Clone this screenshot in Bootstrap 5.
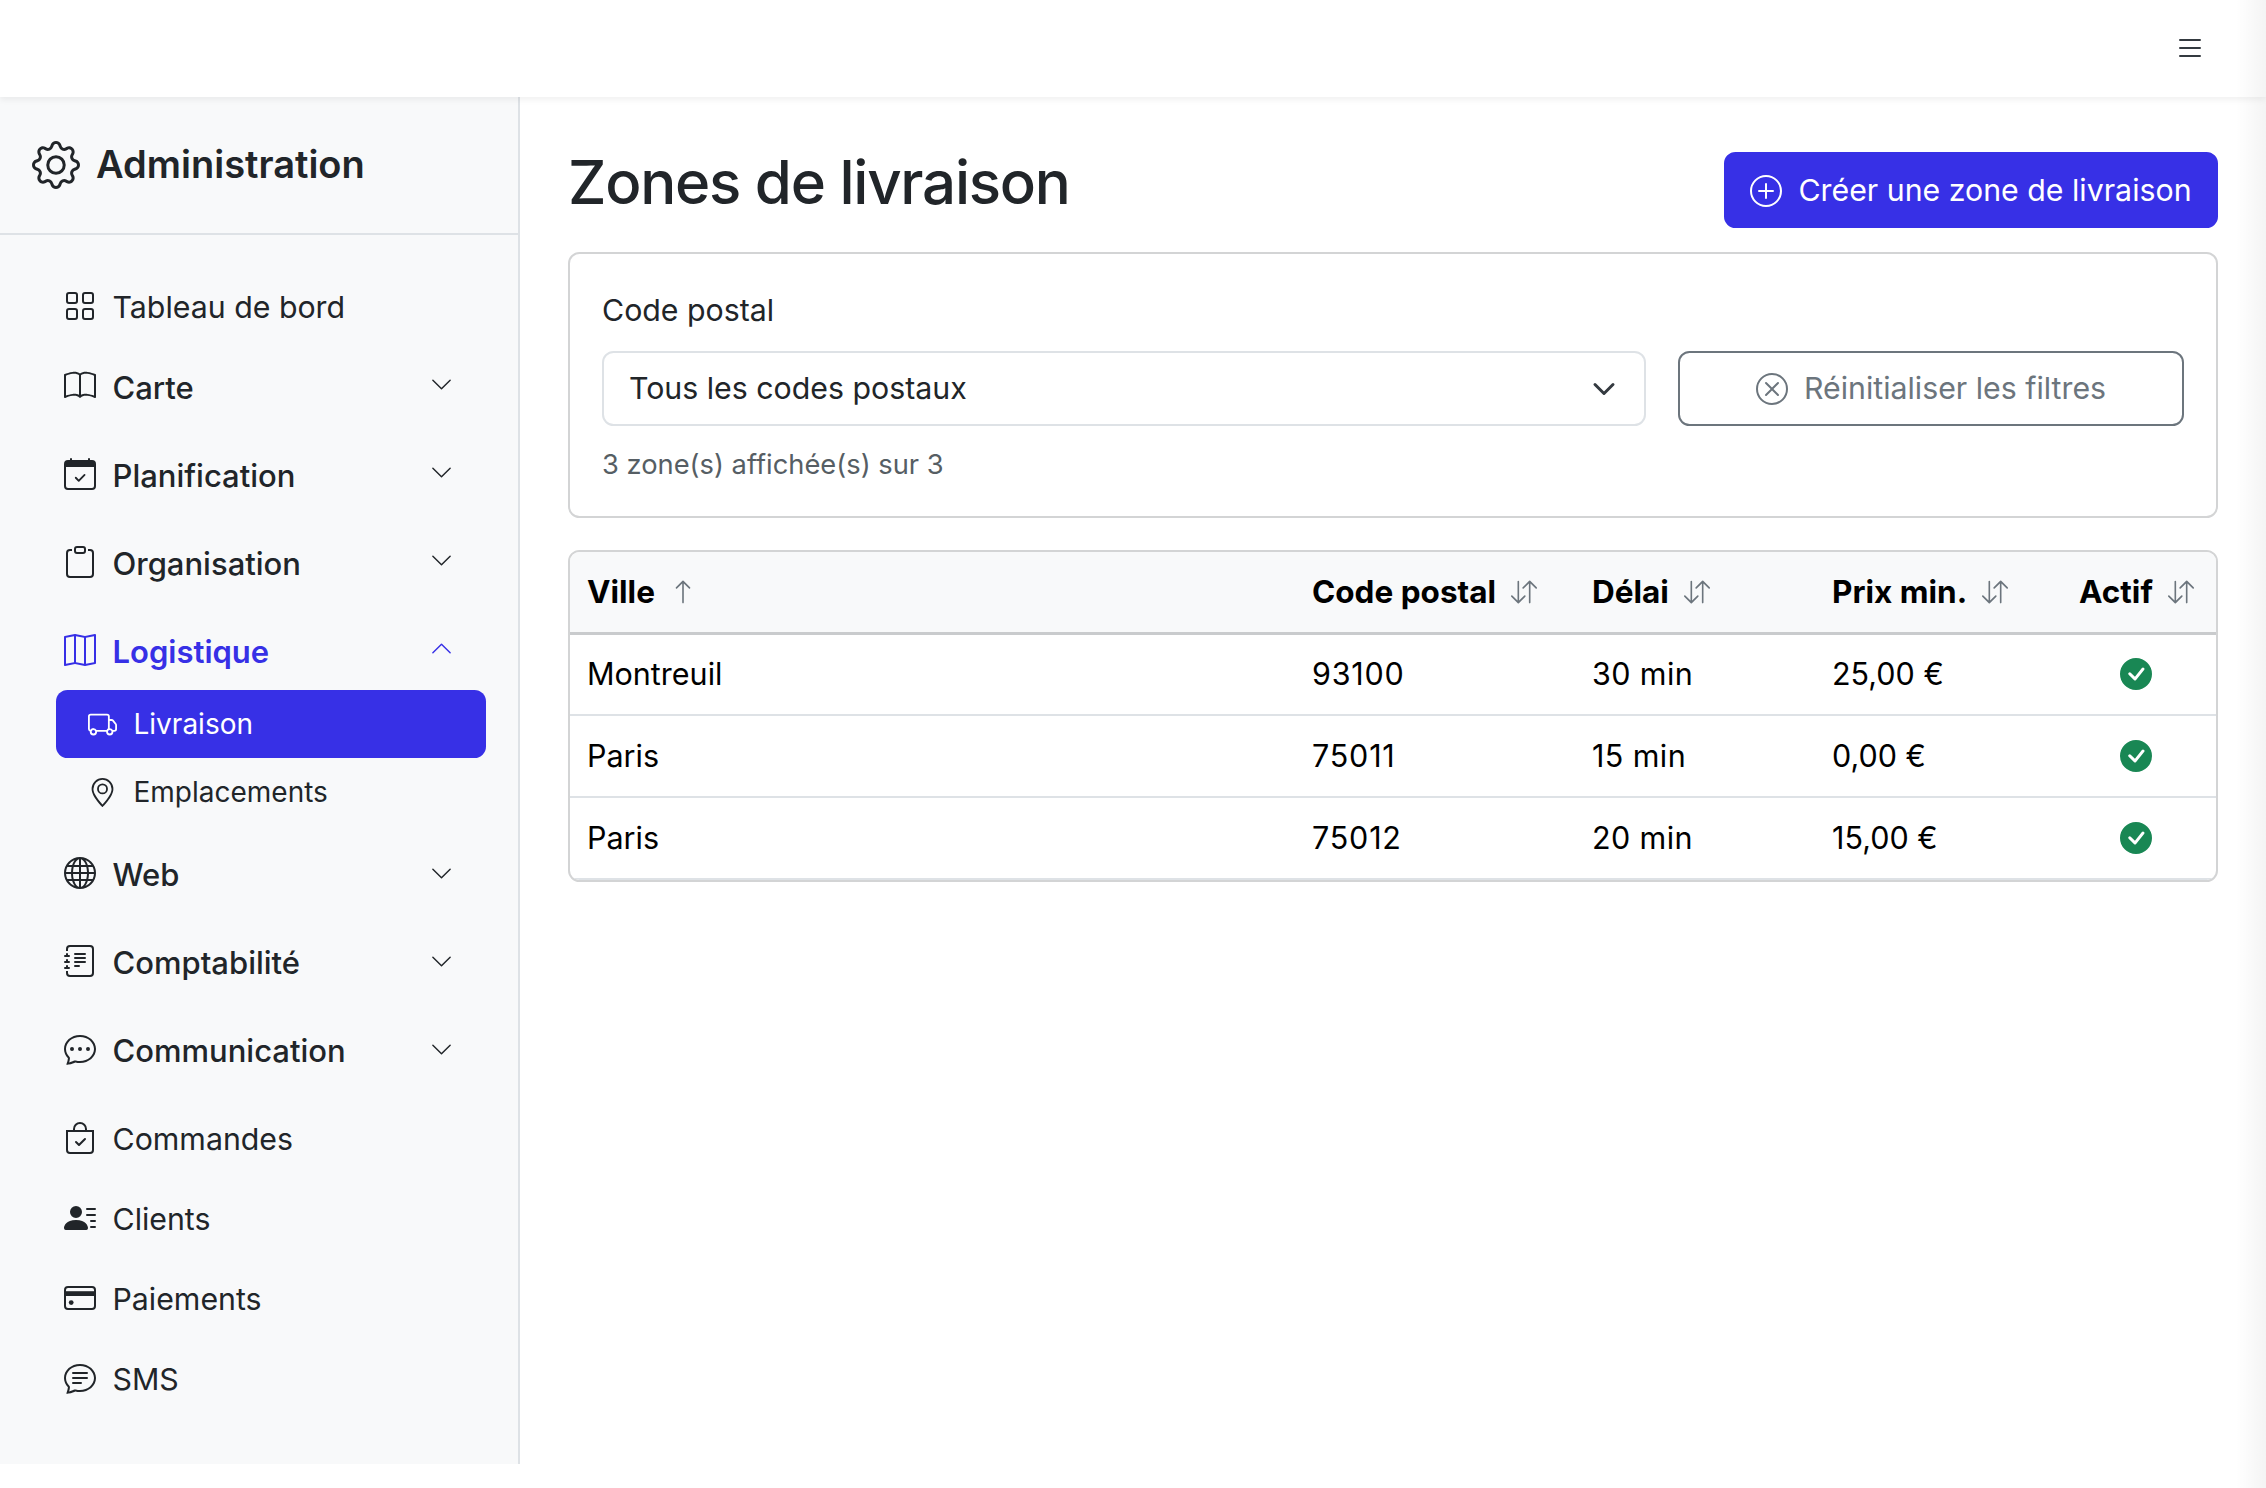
<!DOCTYPE html>
<html lang="fr">
<head>
<meta charset="utf-8">
<title>Zones de livraison</title>
<link href="https://cdn.jsdelivr.net/npm/bootstrap@5.3.0/dist/css/bootstrap.min.css" rel="stylesheet">
<style>
html{font-size:30.3px;}
:root{--bs-body-font-family:"Inter",sans-serif;--bs-border-width:2px;--brand-blue:#3730e6;}
body{font-family:"Inter",sans-serif;height:1488px;overflow:hidden;position:relative;background:#fff;}
.edge-shade{position:absolute;top:0;right:0;bottom:0;width:30px;background:linear-gradient(90deg,rgba(0,0,0,0),rgba(0,0,0,.045));pointer-events:none;z-index:10;}
.page-col{height:1488px;padding-bottom:24px;}
.topbar{height:97px;padding:0 50px 2px 0;z-index:5;box-shadow:0 3px 6px rgba(0,0,0,.06);}
.burger{border:0;background:none;padding:0;margin-right:10px;line-height:0;color:#343a40;}
.ico-lg{width:32px;height:32px;flex:none;fill:currentColor;}
.ico-md{width:29px;height:29px;flex:none;fill:currentColor;}
.ico-chev{width:23px;height:23px;flex:none;fill:currentColor;}
.ico-sort{width:26px;height:26px;flex:none;fill:#6c757d;}
.side-panel{width:520px;flex:none;background:#f8f9fa;border-right:2px solid #dee2e6;}
.brand-box{height:138px;padding:0 32px;gap:16px;border-bottom:2px solid #dee2e6;}
.brand-box .ico-brand{width:48px;height:48px;fill:currentColor;flex:none;}
.brand-name{font-size:38px;font-weight:600;margin:0;color:#212529;}
.menu-list{padding:33px 64px 0 64px;margin:0;list-style:none;}
.menu-link{display:flex;align-items:flex-start;gap:16.5px;color:#212529;text-decoration:none;line-height:35px;}
.menu-leaf{height:80px;padding-top:22.5px;}
.menu-leaf.first-leaf{padding-top:21.5px;}
.menu-parent{height:88px;padding-top:22px;font-weight:500;font-size:31px;}
.menu-parent.is-open{height:78px;color:var(--brand-blue);font-weight:600;}
.menu-parent .ico-chev{margin-left:auto;margin-right:1px;margin-top:2.5px;}
.menu-parent.is-open .ico-chev{margin-top:3px;}
.menu-parent.chev-low .ico-chev{margin-top:5px;}
.menu-text{flex:1 1 auto;}
.sub-list{list-style:none;padding:0;margin:0 0 9px -8px;width:430px;}
.sub-link{display:flex;align-items:center;gap:16.5px;height:68px;padding:0 32px;border-radius:11.5px;color:#212529;text-decoration:none;font-size:28px;}
.sub-link.is-current{background:var(--brand-blue);color:#fff;}
.work-area{padding:55px 48px 0 48px;min-width:0;flex:1 1 auto;}
.page-title{font-size:60px;font-weight:500;letter-spacing:-1.25px;margin:0 0 16px;color:#212529;line-height:1.2;}
.head-row{height:76px;margin-bottom:24px;}
.make-btn{--bs-btn-bg:var(--brand-blue);--bs-btn-border-color:var(--brand-blue);--bs-btn-hover-bg:var(--brand-blue);--bs-btn-hover-border-color:var(--brand-blue);height:76px;width:494px;gap:16px;font-size:1rem;padding:2px 0 0;border-radius:11.5px;font-weight:400;}
.filter-box{padding:39px 32px 36px;margin-bottom:32px;border-radius:11.5px;border-color:#d3d4d5;}
.filter-row{gap:32px;}
.filter-label{line-height:35px;margin-bottom:23px;font-size:1rem;display:block;}
.filter-select{height:75px;font-size:1rem;padding:0 60px 0 25px;border-radius:11.5px;color:#212529;background-size:24px 24px;background-position:right 28px center;}
.reset-btn{width:506px;height:75px;flex:none;gap:16px;font-size:1rem;padding:0;border-radius:11.5px;color:#6c757d;border:2px solid #6c757d;background:#fff;}
.filter-note{font-size:27.3px;line-height:30px;margin:24px 0 0;color:#565e64;}
.table-box{border-radius:11.5px;overflow:hidden;border-color:#d3d4d5;}
.zone-table{table-layout:fixed;margin:0;--bs-table-color:#000;font-size:30.5px;}
.zone-table th,.zone-table td{padding:0 17px;vertical-align:middle;color:#000;}
.zone-table thead th{height:81px;background:#f8f9fa;font-weight:700;font-size:31.5px;border-bottom:3px solid #c9cbcd;}
.zone-table tbody td{height:82px;border-bottom:2px solid #dee2e6;}
.zone-table .num-wide{letter-spacing:.8px;}
.zone-table .num-mid{letter-spacing:.4px;}
.wd-city{width:725px;}
.wd-code{width:280px;}
.wd-time{width:240px;}
.wd-price{width:247px;}
.head-cell{display:flex;align-items:center;gap:15px;}
.ok-mark{width:32px;height:32px;fill:#198754;display:block;margin:0 auto 0 41px;}
</style>
</head>
<body>
<svg width="0" height="0" class="d-none" aria-hidden="true">
<symbol id="i-gear" viewBox="0 0 16 16"><path d="M8 4.754a3.246 3.246 0 1 0 0 6.492 3.246 3.246 0 0 0 0-6.492M5.754 8a2.246 2.246 0 1 1 4.492 0 2.246 2.246 0 0 1-4.492 0"/><path d="M9.796 1.343c-.527-1.79-3.065-1.79-3.592 0l-.094.319a.873.873 0 0 1-1.255.52l-.292-.16c-1.64-.892-3.433.902-2.54 2.541l.159.292a.873.873 0 0 1-.52 1.255l-.319.094c-1.79.527-1.79 3.065 0 3.592l.319.094a.873.873 0 0 1 .52 1.255l-.16.292c-.892 1.64.901 3.434 2.541 2.54l.292-.159a.873.873 0 0 1 1.255.52l.094.319c.527 1.79 3.065 1.79 3.592 0l.094-.319a.873.873 0 0 1 1.255-.52l.292.16c1.64.893 3.434-.902 2.54-2.541l-.159-.292a.873.873 0 0 1 .52-1.255l.319-.094c1.79-.527 1.79-3.065 0-3.592l-.319-.094a.873.873 0 0 1-.52-1.255l.16-.292c.893-1.64-.902-3.433-2.541-2.54l-.292.159a.873.873 0 0 1-1.255-.52zm-2.633.283c.246-.835 1.428-.835 1.674 0l.094.319a1.873 1.873 0 0 0 2.693 1.115l.291-.16c.764-.415 1.6.42 1.184 1.185l-.159.292a1.873 1.873 0 0 0 1.116 2.692l.318.094c.835.246.835 1.428 0 1.674l-.319.094a1.873 1.873 0 0 0-1.115 2.693l.16.291c.415.764-.42 1.6-1.185 1.184l-.291-.159a1.873 1.873 0 0 0-2.693 1.116l-.094.318c-.246.835-1.428.835-1.674 0l-.094-.319a1.873 1.873 0 0 0-2.692-1.115l-.292.16c-.764.415-1.6-.42-1.184-1.185l.159-.291A1.873 1.873 0 0 0 1.945 8.93l-.319-.094c-.835-.246-.835-1.428 0-1.674l.319-.094A1.873 1.873 0 0 0 3.06 4.377l-.16-.292c-.415-.764.42-1.6 1.185-1.184l.292.159a1.873 1.873 0 0 0 2.692-1.115z"/></symbol>
<symbol id="i-grid" viewBox="0 0 16 16"><path d="M1 2.5A1.5 1.5 0 0 1 2.5 1h3A1.5 1.5 0 0 1 7 2.5v3A1.5 1.5 0 0 1 5.5 7h-3A1.5 1.5 0 0 1 1 5.5zM2.5 2a.5.5 0 0 0-.5.5v3a.5.5 0 0 0 .5.5h3a.5.5 0 0 0 .5-.5v-3a.5.5 0 0 0-.5-.5zm6.5.5A1.5 1.5 0 0 1 10.5 1h3A1.5 1.5 0 0 1 15 2.5v3A1.5 1.5 0 0 1 13.5 7h-3A1.5 1.5 0 0 1 9 5.5zm1.5-.5a.5.5 0 0 0-.5.5v3a.5.5 0 0 0 .5.5h3a.5.5 0 0 0 .5-.5v-3a.5.5 0 0 0-.5-.5zM1 10.5A1.5 1.5 0 0 1 2.5 9h3A1.5 1.5 0 0 1 7 10.5v3A1.5 1.5 0 0 1 5.5 15h-3A1.5 1.5 0 0 1 1 13.5zm1.5-.5a.5.5 0 0 0-.5.5v3a.5.5 0 0 0 .5.5h3a.5.5 0 0 0 .5-.5v-3a.5.5 0 0 0-.5-.5zm6.5.5A1.5 1.5 0 0 1 10.5 9h3a1.5 1.5 0 0 1 1.5 1.5v3a1.5 1.5 0 0 1-1.5 1.5h-3A1.5 1.5 0 0 1 9 13.5zm1.5-.5a.5.5 0 0 0-.5.5v3a.5.5 0 0 0 .5.5h3a.5.5 0 0 0 .5-.5v-3a.5.5 0 0 0-.5-.5z"/></symbol>
<symbol id="i-book" viewBox="0 0 16 16"><path d="M1 2.828c.885-.37 2.154-.769 3.388-.893 1.33-.134 2.458.063 3.112.752v9.746c-.935-.53-2.12-.603-3.213-.493-1.18.12-2.37.461-3.287.811zm7.5-.141c.654-.689 1.782-.886 3.112-.752 1.234.124 2.503.523 3.388.893v9.923c-.918-.35-2.107-.692-3.287-.81-1.094-.111-2.278-.039-3.213.492zM8 1.783C7.015.936 5.587.81 4.287.94c-1.514.153-3.042.672-3.994 1.105A.5.5 0 0 0 0 2.5v11a.5.5 0 0 0 .707.455c.882-.4 2.303-.881 3.68-1.02 1.409-.142 2.59.087 3.223.877a.5.5 0 0 0 .78 0c.633-.79 1.814-1.019 3.222-.877 1.378.139 2.8.62 3.681 1.02A.5.5 0 0 0 16 13.5v-11a.5.5 0 0 0-.293-.455c-.952-.433-2.48-.952-3.994-1.105C10.413.809 8.985.936 8 1.783"/></symbol>
<symbol id="i-cal" viewBox="0 0 16 16"><path d="M3.5 0a.5.5 0 0 1 .5.5V1h8V.5a.5.5 0 0 1 1 0V1h1a2 2 0 0 1 2 2v11a2 2 0 0 1-2 2H2a2 2 0 0 1-2-2V3a2 2 0 0 1 2-2h1V.5a.5.5 0 0 1 .5-.5M2 2a1 1 0 0 0-1 1v11a1 1 0 0 0 1 1h12a1 1 0 0 0 1-1V3a1 1 0 0 0-1-1z"/><path d="M1 2h14v2.5H1z"/><path d="M10.6 8.15a.45.45 0 0 1 0 .64l-2.9 2.9a.45.45 0 0 1-.64 0l-1.5-1.5a.45.45 0 0 1 .64-.64l1.18 1.18 2.58-2.58a.45.45 0 0 1 .64 0"/></symbol>
<symbol id="i-clip" viewBox="0 0 16 16"><path d="M4 1.5H3a2 2 0 0 0-2 2V14a2 2 0 0 0 2 2h10a2 2 0 0 0 2-2V3.5a2 2 0 0 0-2-2h-1v1h1a1 1 0 0 1 1 1V14a1 1 0 0 1-1 1H3a1 1 0 0 1-1-1V3.5a1 1 0 0 1 1-1h1z"/><path d="M9.5 1a.5.5 0 0 1 .5.5v1a.5.5 0 0 1-.5.5h-3a.5.5 0 0 1-.5-.5v-1a.5.5 0 0 1 .5-.5zm-3-1A1.5 1.5 0 0 0 5 1.5v1A1.5 1.5 0 0 0 6.5 4h3A1.5 1.5 0 0 0 11 2.5v-1A1.5 1.5 0 0 0 9.5 0z"/></symbol>
<symbol id="i-map" viewBox="0 0 16 16"><path fill-rule="evenodd" d="M15.817.113A.5.5 0 0 1 16 .5v14a.5.5 0 0 1-.402.49l-5 1a.5.5 0 0 1-.196 0L5.5 15.01l-4.902.98A.5.5 0 0 1 0 15.5v-14a.5.5 0 0 1 .402-.49l5-1a.5.5 0 0 1 .196 0L10.5.99l4.902-.98a.5.5 0 0 1 .415.103M10 1.91l-4-.8v12.98l4 .8zm1 12.98 4-.8V1.11l-4 .8zm-6-.8V1.11l-4 .8v12.98z"/></symbol>
<symbol id="i-truck" viewBox="0 0 16 16"><path d="M0 3.5A1.5 1.5 0 0 1 1.5 2h9A1.5 1.5 0 0 1 12 3.5V5h1.02a1.5 1.5 0 0 1 1.17.563l1.481 1.85a1.5 1.5 0 0 1 .329.938V10.5a1.5 1.5 0 0 1-1.5 1.5H14a2 2 0 1 1-4 0H5a2 2 0 1 1-3.998-.085A1.5 1.5 0 0 1 0 10.5zm1.294 7.456A2 2 0 0 1 4.732 11h5.536a2 2 0 0 1 .732-.732V3.5a.5.5 0 0 0-.5-.5h-9a.5.5 0 0 0-.5.5v7a.5.5 0 0 0 .294.456M12 10a2 2 0 0 1 1.732 1h.768a.5.5 0 0 0 .5-.5V8.35a.5.5 0 0 0-.11-.312l-1.48-1.85A.5.5 0 0 0 13.02 6H12zm-9 1a1 1 0 1 0 0 2 1 1 0 0 0 0-2m9 0a1 1 0 1 0 0 2 1 1 0 0 0 0-2"/></symbol>
<symbol id="i-geo" viewBox="0 0 16 16"><path d="M12.166 8.94c-.524 1.062-1.234 2.12-1.96 3.07A32 32 0 0 1 8 14.58a32 32 0 0 1-2.206-2.57c-.726-.95-1.436-2.008-1.96-3.07C3.304 7.867 3 6.862 3 6a5 5 0 0 1 10 0c0 .862-.305 1.867-.834 2.94M8 16s6-5.686 6-10A6 6 0 0 0 2 6c0 4.314 6 10 6 10"/><path d="M8 8a2 2 0 1 1 0-4 2 2 0 0 1 0 4m0 1a3 3 0 1 0 0-6 3 3 0 0 0 0 6"/></symbol>
<symbol id="i-globe" viewBox="0 0 16 16"><path d="M0 8a8 8 0 1 1 16 0A8 8 0 0 1 0 8m7.5-6.923c-.67.204-1.335.82-1.887 1.855A8 8 0 0 0 5.145 4H7.5zM4.09 4a9.3 9.3 0 0 1 .64-1.539 7 7 0 0 1 .597-.933A7.03 7.03 0 0 0 2.255 4zm-.582 3.5c.03-.877.138-1.718.312-2.5H1.674a7 7 0 0 0-.656 2.5zM4.847 5a12.5 12.5 0 0 0-.338 2.5H7.5V5zM8.5 5v2.5h2.99a12.5 12.5 0 0 0-.337-2.5zM4.51 8.5a12.5 12.5 0 0 0 .337 2.5H7.5V8.5zm3.99 0V11h2.653c.187-.765.306-1.608.338-2.5zM5.145 12q.208.58.468 1.068c.552 1.035 1.218 1.65 1.887 1.855V12zm.182 2.472a7 7 0 0 1-.597-.933A9.3 9.3 0 0 1 4.09 12H2.255a7 7 0 0 0 3.072 2.472M3.82 11a13.7 13.7 0 0 1-.312-2.5h-2.49c.062.89.291 1.733.656 2.5zm6.853 3.472A7 7 0 0 0 13.745 12H11.91a9.3 9.3 0 0 1-.64 1.539 7 7 0 0 1-.597.933M8.5 12v2.923c.67-.204 1.335-.82 1.887-1.855q.26-.487.468-1.068zm3.68-1h2.146c.365-.767.594-1.61.656-2.5h-2.49a13.7 13.7 0 0 1-.312 2.5m2.802-3.5a7 7 0 0 0-.656-2.5H12.18c.174.782.282 1.623.312 2.5zM11.27 2.461c.247.464.462.98.64 1.539h1.835a7 7 0 0 0-3.072-2.472c.218.284.418.598.597.933M10.855 4a8 8 0 0 0-.468-1.068C9.835 1.897 9.17 1.282 8.5 1.077V4z"/></symbol>
<symbol id="i-journal" viewBox="0 0 16 16"><path d="M5 10.5a.5.5 0 0 1 .5-.5h2a.5.5 0 0 1 0 1h-2a.5.5 0 0 1-.5-.5m0-2a.5.5 0 0 1 .5-.5h5a.5.5 0 0 1 0 1h-5a.5.5 0 0 1-.5-.5m0-2a.5.5 0 0 1 .5-.5h5a.5.5 0 0 1 0 1h-5a.5.5 0 0 1-.5-.5m0-2a.5.5 0 0 1 .5-.5h5a.5.5 0 0 1 0 1h-5a.5.5 0 0 1-.5-.5"/><path d="M3 0h10a2 2 0 0 1 2 2v12a2 2 0 0 1-2 2H3a2 2 0 0 1-2-2v-1h1v1a1 1 0 0 0 1 1h10a1 1 0 0 0 1-1V2a1 1 0 0 0-1-1H3a1 1 0 0 0-1 1v1H1V2a2 2 0 0 1 2-2"/><path d="M1 5v-.5a.5.5 0 0 1 1 0V5h.5a.5.5 0 0 1 0 1h-2a.5.5 0 0 1 0-1zm0 3v-.5a.5.5 0 0 1 1 0V8h.5a.5.5 0 0 1 0 1h-2a.5.5 0 0 1 0-1zm0 3v-.5a.5.5 0 0 1 1 0v.5h.5a.5.5 0 0 1 0 1h-2a.5.5 0 0 1 0-1z"/></symbol>
<symbol id="i-dots" viewBox="0 0 16 16"><path d="M5 8a1 1 0 1 1-2 0 1 1 0 0 1 2 0m4 0a1 1 0 1 1-2 0 1 1 0 0 1 2 0m3 1a1 1 0 1 0 0-2 1 1 0 0 0 0 2"/><path d="m2.165 15.803.02-.004c1.83-.363 2.948-.842 3.468-1.105A9 9 0 0 0 8 15c4.418 0 8-3.134 8-7s-3.582-7-8-7-8 3.134-8 7c0 1.76.743 3.37 1.97 4.6a10.4 10.4 0 0 1-.524 2.318l-.003.011a11 11 0 0 1-.244.637c-.079.186.074.394.273.362a22 22 0 0 0 .693-.125m.8-3.108a1 1 0 0 0-.287-.801C1.618 10.83 1 9.468 1 8c0-3.192 3.004-6 7-6s7 2.808 7 6-3.004 6-7 6a8 8 0 0 1-2.088-.272 1 1 0 0 0-.711.074c-.387.196-1.24.57-2.634.893a11 11 0 0 0 .398-2"/></symbol>
<symbol id="i-bag" viewBox="0 0 16 16"><path d="M10.854 8.146a.5.5 0 0 1 0 .708l-3 3a.5.5 0 0 1-.708 0l-1.5-1.5a.5.5 0 0 1 .708-.708L7.5 10.793l2.646-2.647a.5.5 0 0 1 .708 0"/><path d="M8 1a2.5 2.5 0 0 1 2.5 2.5V4h-5v-.5A2.5 2.5 0 0 1 8 1m3.5 3v-.5a3.5 3.5 0 1 0-7 0V4H1v10a2 2 0 0 0 2 2h10a2 2 0 0 0 2-2V4zM2 5h12v9a1 1 0 0 1-1 1H3a1 1 0 0 1-1-1z"/></symbol>
<symbol id="i-person" viewBox="0 0 16 16"><path d="M6 8a3 3 0 1 0 0-6 3 3 0 0 0 0 6m-5 6s-1 0-1-1 1-4 6-4 6 3 6 4-1 1-1 1zM11 3.5a.5.5 0 0 1 .5-.5h4a.5.5 0 0 1 0 1h-4a.5.5 0 0 1-.5-.5m.5 2.5a.5.5 0 0 0 0 1h4a.5.5 0 0 0 0-1zm2 3a.5.5 0 0 0 0 1h2a.5.5 0 0 0 0-1zm0 3a.5.5 0 0 0 0 1h2a.5.5 0 0 0 0-1z"/></symbol>
<symbol id="i-card" viewBox="0 0 16 16"><path d="M0 4a2 2 0 0 1 2-2h12a2 2 0 0 1 2 2v8a2 2 0 0 1-2 2H2a2 2 0 0 1-2-2zm2-1a1 1 0 0 0-1 1v8a1 1 0 0 0 1 1h12a1 1 0 0 0 1-1V4a1 1 0 0 0-1-1z"/><path d="M.5 4.6h15V7H.5z"/><circle cx="3.6" cy="10.3" r="1.2"/></symbol>
<symbol id="i-sms" viewBox="0 0 16 16"><path d="M2.678 11.894a1 1 0 0 1 .287.801 11 11 0 0 1-.398 2c1.395-.323 2.247-.697 2.634-.893a1 1 0 0 1 .71-.074A8 8 0 0 0 8 14c3.996 0 7-2.807 7-6s-3.004-6-7-6-7 2.808-7 6c0 1.468.617 2.83 1.678 3.894m-.493 3.905a22 22 0 0 1-.713.129c-.2.032-.352-.176-.273-.362a10 10 0 0 0 .244-.637l.003-.01c.248-.72.45-1.548.524-2.319C.743 11.37 0 9.76 0 8c0-3.866 3.582-7 8-7s8 3.134 8 7-3.582 7-8 7a9 9 0 0 1-2.347-.306c-.52.263-1.639.742-3.468 1.105"/><path d="M4 5.5a.5.5 0 0 1 .5-.5h7a.5.5 0 0 1 0 1h-7a.5.5 0 0 1-.5-.5M4 8a.5.5 0 0 1 .5-.5h7a.5.5 0 0 1 0 1h-7A.5.5 0 0 1 4 8m0 2.5a.5.5 0 0 1 .5-.5h4a.5.5 0 0 1 0 1h-4a.5.5 0 0 1-.5-.5"/></symbol>
<symbol id="i-down" viewBox="0 0 16 16"><path d="M1.646 4.646a.5.5 0 0 1 .708 0L8 10.293l5.646-5.647a.5.5 0 0 1 .708.708l-6 6a.5.5 0 0 1-.708 0l-6-6a.5.5 0 0 1 0-.708"/></symbol>
<symbol id="i-up" viewBox="0 0 16 16"><path d="M7.646 4.646a.5.5 0 0 1 .708 0l6 6a.5.5 0 0 1-.708.708L8 5.707l-5.646 5.647a.5.5 0 0 1-.708-.708z"/></symbol>
<symbol id="i-plus" viewBox="0 0 16 16"><path d="M8 15A7 7 0 1 1 8 1a7 7 0 0 1 0 14m0 1A8 8 0 1 0 8 0a8 8 0 0 0 0 16"/><path d="M8 4a.5.5 0 0 1 .5.5v3h3a.5.5 0 0 1 0 1h-3v3a.5.5 0 0 1-1 0v-3h-3a.5.5 0 0 1 0-1h3v-3A.5.5 0 0 1 8 4"/></symbol>
<symbol id="i-xc" viewBox="0 0 16 16"><path d="M8 15A7 7 0 1 1 8 1a7 7 0 0 1 0 14m0 1A8 8 0 1 0 8 0a8 8 0 0 0 0 16"/><path d="M4.646 4.646a.5.5 0 0 1 .708 0L8 7.293l2.646-2.647a.5.5 0 0 1 .708.708L8.707 8l2.647 2.646a.5.5 0 0 1-.708.708L8 8.707l-2.646 2.647a.5.5 0 0 1-.708-.708L7.293 8 4.646 5.354a.5.5 0 0 1 0-.708"/></symbol>
<symbol id="i-ok" viewBox="0 0 16 16"><path d="M16 8A8 8 0 1 1 0 8a8 8 0 0 1 16 0m-3.97-3.03a.75.75 0 0 0-1.08.022L7.477 9.417 5.384 7.323a.75.75 0 0 0-1.06 1.06L6.97 11.03a.75.75 0 0 0 1.079-.02l3.992-4.99a.75.75 0 0 0-.01-1.05z"/></symbol>
<symbol id="i-aup" viewBox="0 0 16 16"><path d="M8 15a.5.5 0 0 0 .5-.5V2.707l3.146 3.147a.5.5 0 0 0 .708-.708l-4-4a.5.5 0 0 0-.708 0l-4 4a.5.5 0 1 0 .708.708L7.5 2.707V14.5a.5.5 0 0 0 .5.5"/></symbol>
<symbol id="i-sort" viewBox="0 0 16 16"><path d="M11.5 15a.5.5 0 0 0 .5-.5V2.707l3.146 3.147a.5.5 0 0 0 .708-.708l-4-4a.5.5 0 0 0-.708 0l-4 4a.5.5 0 1 0 .708.708L11 2.707V14.5a.5.5 0 0 0 .5.5m-7-14a.5.5 0 0 1 .5.5v11.793l3.146-3.147a.5.5 0 0 1 .708.708l-4 4a.5.5 0 0 1-.708 0l-4-4a.5.5 0 0 1 .708-.708L4 13.293V1.5a.5.5 0 0 1 .5-.5"/></symbol>
<symbol id="i-list" viewBox="0 0 16 16"><path d="M2.5 12a.5.5 0 0 1 .5-.5h10a.5.5 0 0 1 0 1H3a.5.5 0 0 1-.5-.5m0-4a.5.5 0 0 1 .5-.5h10a.5.5 0 0 1 0 1H3a.5.5 0 0 1-.5-.5m0-4a.5.5 0 0 1 .5-.5h10a.5.5 0 0 1 0 1H3a.5.5 0 0 1-.5-.5"/></symbol>
</svg>

<div class="d-flex flex-column page-col">
  <nav class="navbar bg-white topbar justify-content-end">
    <button class="burger" type="button" aria-label="Menu"><svg class="ico-lg"><use href="#i-list"/></svg></button>
  </nav>
  <div class="d-flex flex-grow-1">
    <aside class="side-panel">
      <div class="brand-box d-flex align-items-center">
        <svg class="ico-brand"><use href="#i-gear"/></svg>
        <h5 class="brand-name">Administration</h5>
      </div>
      <ul class="menu-list">
        <li><a class="menu-link menu-leaf first-leaf" href="#"><svg class="ico-lg"><use href="#i-grid"/></svg><span class="menu-text">Tableau de bord</span></a></li>
        <li><a class="menu-link menu-parent" href="#"><svg class="ico-lg"><use href="#i-book"/></svg><span class="menu-text">Carte</span><svg class="ico-chev"><use href="#i-down"/></svg></a></li>
        <li><a class="menu-link menu-parent" href="#"><svg class="ico-lg"><use href="#i-cal"/></svg><span class="menu-text">Planification</span><svg class="ico-chev"><use href="#i-down"/></svg></a></li>
        <li><a class="menu-link menu-parent" href="#"><svg class="ico-lg"><use href="#i-clip"/></svg><span class="menu-text">Organisation</span><svg class="ico-chev"><use href="#i-down"/></svg></a></li>
        <li><a class="menu-link menu-parent is-open" href="#"><svg class="ico-lg"><use href="#i-map"/></svg><span class="menu-text">Logistique</span><svg class="ico-chev"><use href="#i-up"/></svg></a>
          <ul class="sub-list">
            <li><a class="sub-link is-current" href="#"><svg class="ico-md"><use href="#i-truck"/></svg>Livraison</a></li>
            <li><a class="sub-link" href="#"><svg class="ico-md"><use href="#i-geo"/></svg>Emplacements</a></li>
          </ul>
        </li>
        <li><a class="menu-link menu-parent chev-low" href="#"><svg class="ico-lg"><use href="#i-globe"/></svg><span class="menu-text">Web</span><svg class="ico-chev"><use href="#i-down"/></svg></a></li>
        <li><a class="menu-link menu-parent chev-low" href="#"><svg class="ico-lg"><use href="#i-journal"/></svg><span class="menu-text">Comptabilité</span><svg class="ico-chev"><use href="#i-down"/></svg></a></li>
        <li><a class="menu-link menu-parent chev-low" href="#"><svg class="ico-lg"><use href="#i-dots"/></svg><span class="menu-text">Communication</span><svg class="ico-chev"><use href="#i-down"/></svg></a></li>
        <li><a class="menu-link menu-leaf" href="#"><svg class="ico-lg"><use href="#i-bag"/></svg><span class="menu-text">Commandes</span></a></li>
        <li><a class="menu-link menu-leaf" href="#"><svg class="ico-lg"><use href="#i-person"/></svg><span class="menu-text">Clients</span></a></li>
        <li><a class="menu-link menu-leaf" href="#"><svg class="ico-lg"><use href="#i-card"/></svg><span class="menu-text">Paiements</span></a></li>
        <li><a class="menu-link menu-leaf" href="#"><svg class="ico-lg"><use href="#i-sms"/></svg><span class="menu-text">SMS</span></a></li>
      </ul>
    </aside>
    <main class="work-area">
      <div class="head-row d-flex justify-content-between align-items-center">
        <h1 class="page-title">Zones de livraison</h1>
        <button class="btn btn-primary make-btn d-inline-flex align-items-center justify-content-center" type="button"><svg class="ico-lg"><use href="#i-plus"/></svg>Créer une zone de livraison</button>
      </div>
      <div class="card filter-box">
        <div class="d-flex align-items-end filter-row">
          <div class="flex-grow-1">
            <label class="filter-label" for="cp">Code postal</label>
            <select id="cp" class="form-select filter-select"><option>Tous les codes postaux</option></select>
          </div>
          <button class="btn reset-btn d-inline-flex align-items-center justify-content-center" type="button"><svg class="ico-lg"><use href="#i-xc"/></svg>Réinitialiser les filtres</button>
        </div>
        <p class="filter-note">3 zone(s) affichée(s) sur 3</p>
      </div>
      <div class="card table-box">
        <table class="table zone-table">
          <thead>
            <tr>
              <th class="wd-city"><span class="head-cell">Ville<svg class="ico-sort"><use href="#i-aup"/></svg></span></th>
              <th class="wd-code"><span class="head-cell">Code postal<svg class="ico-sort"><use href="#i-sort"/></svg></span></th>
              <th class="wd-time"><span class="head-cell">Délai<svg class="ico-sort"><use href="#i-sort"/></svg></span></th>
              <th class="wd-price"><span class="head-cell">Prix min.<svg class="ico-sort"><use href="#i-sort"/></svg></span></th>
              <th><span class="head-cell">Actif<svg class="ico-sort"><use href="#i-sort"/></svg></span></th>
            </tr>
          </thead>
          <tbody>
            <tr><td>Montreuil</td><td class="num-wide">93100</td><td class="num-mid">30 min</td><td>25,00 €</td><td><svg class="ok-mark"><use href="#i-ok"/></svg></td></tr>
            <tr><td>Paris</td><td class="num-wide">75011</td><td class="num-mid">15 min</td><td>0,00 €</td><td><svg class="ok-mark"><use href="#i-ok"/></svg></td></tr>
            <tr><td>Paris</td><td class="num-wide">75012</td><td class="num-mid">20 min</td><td>15,00 €</td><td><svg class="ok-mark"><use href="#i-ok"/></svg></td></tr>
          </tbody>
        </table>
      </div>
    </main>
  </div>
</div>
<div class="edge-shade"></div>
<script src="https://cdn.jsdelivr.net/npm/bootstrap@5.3.0/dist/js/bootstrap.bundle.min.js"></script>
</body>
</html>
